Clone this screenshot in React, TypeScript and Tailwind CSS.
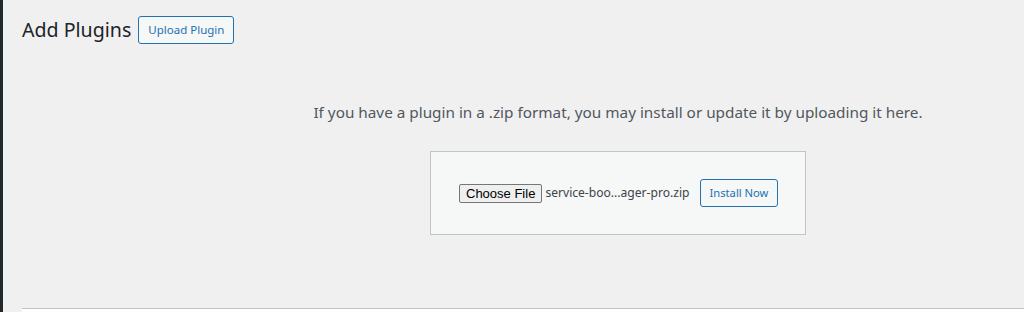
import React from "react";

export default function App() {
  return (
    <div className="w-[1024px] h-[312px] overflow-hidden bg-[#f0f0f1] flex" style={{ fontFamily: '"Noto Sans", "Open Sans", sans-serif' }}>
      <div className="w-[3px] shrink-0 bg-[#23282d]" />
      <div className="flex-1 flex flex-col pl-[19px]">
        <div className="flex items-center h-[28px] mt-[16px]">
          <h1 className="text-[19.6px] leading-[28px] text-[#1d2327] font-normal">Add Plugins</h1>
          <button className="ml-[7px] h-[28px] px-[9px] text-[11.5px] text-[#2271b1] border border-[#2271b1] bg-[#f6f7f7] rounded-[3px] leading-none">
            Upload Plugin
          </button>
        </div>
        <div className="ml-[291px] w-[610px] flex flex-col items-center mt-[58px]">
          <p className="text-[15.3px] leading-[20px] text-[#50575e] whitespace-nowrap">
            If you have a plugin in a .zip format, you may install or update it by uploading it here.
          </p>
          <div className="mt-[29px] w-[376px] h-[84px] bg-[#f6f7f7] border border-[#c3c4c7] flex items-center pl-[28px]">
            <button
              className="h-[19px] px-[6px] bg-[#efefef] border border-[#767676] rounded-[2px] text-[13px] leading-none text-black"
              style={{ fontFamily: '"Liberation Sans", Arial, sans-serif' }}
            >
              Choose File
            </button>
            <span className="ml-[3px] text-[12.1px] text-[#3c434a]">service-boo...ager-pro.zip</span>
            <button className="ml-[10px] h-[28px] px-[9px] text-[11.2px] text-[#2271b1] border border-[#2271b1] bg-[#f6f7f7] rounded-[3px] leading-none">
              Install Now
            </button>
          </div>
        </div>
        <div className="mt-auto h-[4px] bg-white border-t border-[#c3c4c7]" />
      </div>
    </div>
  );
}
